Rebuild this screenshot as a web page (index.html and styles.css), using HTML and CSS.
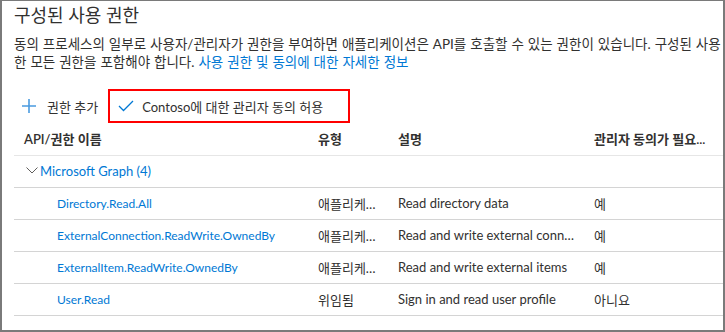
FILE: index.html
```html
<!DOCTYPE html>
<html lang="ko">
<head>
    <meta charset="UTF-8">
    <meta name="viewport" content="width=device-width, initial-scale=1.0">
    <title>구성된 사용 권한</title>
    <link rel="stylesheet" href="styles.css">
</head>
<body>
    <div class="frame">
        <h2 class="title">구성된 사용 권한</h2>
        <p class="intro">
            <span class="line">동의 프로세스의 일부로 사용자/관리자가 권한을 부여하면 애플리케이션은 API를 호출할 수 있는 권한이 있습니다. 구성된 사용 권한 목록에는 애플리케이션에 필요</span>
            <span class="line">한 모든 권한을 포함해야 합니다. <a href="#">사용 권한 및 동의에 대한 자세한 정보</a></span>
        </p>

        <div class="toolbar">
            <button class="tool">
                <svg width="14" height="14" viewBox="0 0 14 14"><path d="M7 0v14M0 7h14" stroke="#4a9be0" stroke-width="1.6" fill="none"/></svg>
                <span>권한 추가</span>
            </button>
            <button class="tool grant">
                <svg width="16" height="12" viewBox="0 0 16 12"><polyline points="1,6 5.5,10.5 15,1" stroke="#0078d4" stroke-width="1.3" fill="none"/></svg>
                <span>Contoso에 대한 관리자 동의 허용</span>
            </button>
        </div>

        <table class="perms">
            <colgroup>
                <col class="c-name">
                <col class="c-type">
                <col class="c-desc">
                <col>
            </colgroup>
            <thead>
                <tr>
                    <th>API/권한 이름</th>
                    <th>유형</th>
                    <th>설명</th>
                    <th>관리자 동의가 필요...</th>
                </tr>
            </thead>
            <tbody>
                <tr class="group">
                    <td colspan="4"><svg width="12" height="7" viewBox="0 0 12 7"><polyline points="0.5,0.5 6,6 11.5,0.5" stroke="#605e5c" stroke-width="1" fill="none"/></svg><a href="#">Microsoft Graph (4)</a></td>
                </tr>
                <tr>
                    <td class="name"><a href="#">Directory.Read.All</a></td>
                    <td>애플리케이션</td>
                    <td>Read directory data</td>
                    <td>예</td>
                </tr>
                <tr>
                    <td class="name"><a href="#">ExternalConnection.ReadWrite.OwnedBy</a></td>
                    <td>애플리케이션</td>
                    <td>Read and write external connections</td>
                    <td>예</td>
                </tr>
                <tr>
                    <td class="name"><a href="#">ExternalItem.ReadWrite.OwnedBy</a></td>
                    <td>애플리케이션</td>
                    <td>Read and write external items</td>
                    <td>예</td>
                </tr>
                <tr>
                    <td class="name"><a href="#">User.Read</a></td>
                    <td>위임됨</td>
                    <td>Sign in and read user profile</td>
                    <td>아니요</td>
                </tr>
            </tbody>
        </table>
    </div>
</body>
</html>
```

FILE: styles.css
```css
*{
    margin:0;
    padding:0;
    box-sizing:border-box;
}
body{
    font-family:"Segoe UI",Lato,"Noto Sans CJK KR",sans-serif;
    font-size:13px;
    color:#323130;
    background:#fff;
}
a{
    color:#0078d4;
    text-decoration:none;
}
.frame{
    width:725px;
    height:332px;
    border:2px solid #7a7a7a;
    border-top-width:1px;
    padding-left:12px;
    overflow:hidden;
}
.title{
    font-size:18px;
    font-weight:400;
    line-height:24px;
    margin-top:2px;
}
.intro{
    margin-top:8px;
    font-size:13.5px;
    word-spacing:0.5px;
    line-height:18px;
}
.intro .line{
    display:block;
    white-space:nowrap;
}
.toolbar{
    display:flex;
    align-items:center;
    height:34px;
    margin-top:18px;
}
.tool{
    display:flex;
    align-items:center;
    gap:11px;
    border:0;
    background:none;
    font:inherit;
    color:#323130;
    height:34px;
    padding:0 8px;
    cursor:pointer;
}
.grant{
    border:2px solid #f00;
    margin-left:2px;
    padding:0 10px 0 8px;
    gap:8px;
    width:242px;
}
.perms{
    width:709px;
    border-collapse:collapse;
    table-layout:fixed;
}
.c-name{ width:294px; }
.c-type{ width:80px; }
.c-desc{ width:196px; }
.perms th,
.perms td{
    height:32px;
    padding:0 6px 0 10px;
    text-align:left;
    white-space:nowrap;
    overflow:hidden;
    text-overflow:ellipsis;
    border-bottom:1px solid #d4d4d4;
}
.perms th{
    font-weight:600;
    border-bottom-color:#e6e6e6;
}
.perms td.name{
    padding-left:43px;
    font-size:12px;
}
.group td{
    padding-left:12px;
}
.group svg{
    margin-right:2px;
    vertical-align:2px;
}
```
